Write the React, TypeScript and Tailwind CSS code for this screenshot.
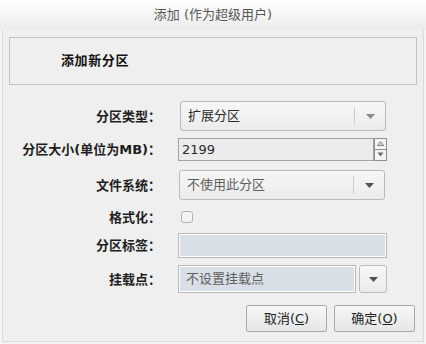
import React from "react";

const font = { fontFamily: '"DejaVu Sans", "Noto Sans CJK SC", sans-serif' };

const Arrow = ({ light }: { light?: boolean }) => (
  <svg width="9" height="5" viewBox="0 0 9 5">
    <path d="M0 0 H9 L4.5 5 Z" fill={light ? "#8a8a8a" : "#505050"} />
  </svg>
);

const Label = ({ children }: { children: React.ReactNode }) => (
  <div className="w-[158px] shrink-0 text-right text-[13px] font-bold text-[#1e1e1e] leading-none">
    {children}
  </div>
);

const Combo = ({ text, muted, light }: { text: string; muted?: boolean; light?: boolean }) => (
  <div className="flex h-full w-[206px] items-center rounded-[3px] border border-[#b9b9b9] bg-linear-to-b from-[#f7f7f7] to-[#ebebeb] ml-[2px]">
    <span className={`flex-1 pl-[7px] text-[13px] ${muted ? "text-[#5e5e5e]" : "text-[#2a2a2a]"}`}>
      {text}
    </span>
    <div className="h-[18px] w-px bg-[#cfcfcf]" />
    <div className="flex w-[30px] items-center justify-center">
      <Arrow light={light} />
    </div>
  </div>
);

export default function App() {
  return (
    <div className="w-[426px] h-[344px] bg-[#f4f4f4] flex flex-col" style={font}>
      {/* title bar */}
      <div className="h-[30px] shrink-0 flex items-center justify-center bg-linear-to-b from-white to-[#ebebeb] text-[13px] text-[#585858]">
        添加 (作为超级用户)
      </div>

      <div className="flex-1 mx-[2px] mb-[2px] border-x border-b border-[#dadada] bg-[#efefef] flex flex-col">
        {/* header box */}
        <div className="mt-[7px] ml-[6px] mr-[6px] h-[48px] border border-[#c3c3c3] flex items-center pl-[51px]">
          <span className="text-[13px] font-bold tracking-[0.6px] text-[#111]">添加新分区</span>
        </div>

        {/* form */}
        <div className="mt-[16px] flex flex-col">
          <div className="flex items-center h-[30px]">
            <Label>分区类型：</Label>
            <div className="ml-[17px] h-full">
              <Combo text="扩展分区" light />
            </div>
          </div>

          <div className="flex items-center h-[23px] mt-[7px]">
            <Label>分区大小(单位为MB)：</Label>
            <div className="ml-[17px] flex h-full">
              <div className="w-[196px] h-full border border-[#a3a3a3] bg-[#ececec] flex items-center pl-[3px] text-[13px] text-[#2a2a2a]">
                2199
              </div>
              <div className="flex flex-col w-[13px] h-full">
                <div className="h-1/2 border border-[#8f8f8f] bg-[#f3f3f3] flex items-center justify-center">
                  <svg width="7" height="5" viewBox="0 0 7 5">
                    <path d="M0.5 4.5 L3.5 0.5 L6.5 4.5 Z" fill="#d8d8d8" stroke="#6a6a6a" strokeWidth="0.8" />
                  </svg>
                </div>
                <div className="h-1/2 border border-t-0 border-[#8f8f8f] bg-[#f3f3f3] flex items-center justify-center">
                  <svg width="7" height="5" viewBox="0 0 7 5">
                    <path d="M0.5 0.5 L3.5 4.5 L6.5 0.5 Z" fill="#6a6a6a" />
                  </svg>
                </div>
              </div>
            </div>
          </div>

          <div className="flex items-center h-[30px] mt-[9px]">
            <Label>文件系统：</Label>
            <div className="ml-[16px] h-full">
              <Combo text="不使用此分区" muted />
            </div>
          </div>

          <div className="flex items-center h-[12px] mt-[11px]">
            <Label>格式化：</Label>
            <div className="ml-[20px] w-[12px] h-[12px] rounded-[3px] border border-[#b0b0b0] bg-[#f4f4f4]" />
          </div>

          <div className="flex items-center h-[25px] mt-[10px]">
            <Label>分区标签：</Label>
            <div className="ml-[17px] w-[209px] h-full border border-[#b8b8b8] p-px bg-white">
              <div className="w-full h-full bg-[#d8dfe6]" />
            </div>
          </div>

          <div className="flex items-center h-[28px] mt-[7px]">
            <Label>挂载点：</Label>
            <div className="ml-[17px] flex h-full">
              <div className="w-[178px] h-full border border-[#b8b8b8] p-px bg-white">
                <div className="w-full h-full bg-[#d8dfe6] flex items-center pl-[6px] text-[13px] text-[#5e5e5e]">
                  不设置挂载点
                </div>
              </div>
              <div className="ml-[3px] w-[28px] h-full rounded-[3px] border border-[#bdbdbd] bg-linear-to-b from-[#f7f7f7] to-[#ebebeb] flex items-center justify-center">
                <Arrow />
              </div>
            </div>
          </div>

          {/* buttons */}
          <div className="flex justify-end gap-[7px] mt-[12px] mr-[8px]">
            <button className="w-[81px] h-[27px] rounded-[2px] border border-[#a9a9a9] bg-linear-to-b from-[#f7f7f7] to-[#e6e6e6] text-[13px] text-[#1e1e1e]">
              取消(<span className="underline">C</span>)
            </button>
            <button className="w-[81px] h-[27px] rounded-[2px] border border-[#a9a9a9] bg-linear-to-b from-[#f7f7f7] to-[#e6e6e6] text-[13px] text-[#1e1e1e]">
              确定(<span className="underline">O</span>)
            </button>
          </div>
        </div>
      </div>
    </div>
  );
}
